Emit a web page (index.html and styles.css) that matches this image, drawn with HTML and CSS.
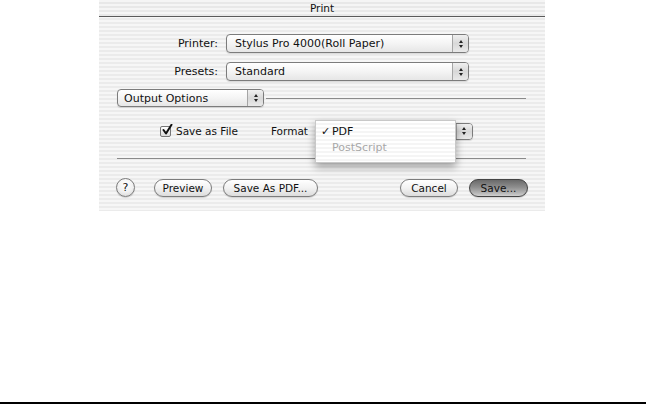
FILE: index.html
```html
<!DOCTYPE html>
<html>
<head>
<meta charset="utf-8">
<title>Print</title>
<link rel="stylesheet" href="styles.css">
</head>
<body>
<div class="page">
  <div class="window">
    <div class="titlebar">Print</div>
    <div class="content">
      <div class="form-grid">
        <div class="label">Printer:</div>
        <div class="popup"><span class="popup-text">Stylus Pro 4000(Roll Paper)</span><span class="stepper"><span class="up"></span><span class="down"></span></span></div>
        <div class="label">Presets:</div>
        <div class="popup"><span class="popup-text">Standard</span><span class="stepper"><span class="up"></span><span class="down"></span></span></div>
      </div>
      <div class="section-row">
        <div class="popup popup-small"><span class="popup-text">Output Options</span><span class="stepper"><span class="up"></span><span class="down"></span></span></div>
        <div class="rule"></div>
      </div>
      <div class="options-row">
        <span class="checkbox"><svg width="12" height="12" viewBox="0 0 12 12"><path d="M2.5 6 L5 9.5 L10.5 0.8" fill="none" stroke="#111" stroke-width="2" stroke-linecap="round" stroke-linejoin="round"/></svg></span>
        <span class="check-label">Save as File</span>
        <span class="format-label">Format</span>
        <div class="popup popup-format"><span class="popup-text"></span><span class="stepper"><span class="up"></span><span class="down"></span></span>
          <div class="menu">
            <div class="menu-item"><span class="mark">✓</span>PDF</div>
            <div class="menu-item disabled"><span class="mark"></span>PostScript</div>
          </div>
        </div>
      </div>
      <div class="separator"></div>
      <div class="buttons">
        <div class="help">?</div>
        <div class="btn btn-preview">Preview</div>
        <div class="btn btn-pdf">Save As PDF...</div>
        <div class="spacer"></div>
        <div class="btn btn-cancel">Cancel</div>
        <div class="btn btn-default">Save...</div>
      </div>
    </div>
  </div>
  <div class="bottom-line"></div>
</div>
</body>
</html>
```

FILE: styles.css
```css
html, body {
  margin: 0;
  padding: 0;
  background: #ffffff;
}
.page {
  height: 404px;
  display: flex;
  flex-direction: column;
  font-family: "DejaVu Sans", "Liberation Sans", sans-serif;
  color: #111;
}
.window {
  width: 446px;
  height: 211px;
  margin-left: 99px;
  background: repeating-linear-gradient(to bottom, #f6f6f6 0px, #f6f6f6 2px, #ebebeb 2px, #ebebeb 4px);
  display: flex;
  flex-direction: column;
}
.titlebar {
  height: 16px;
  line-height: 16px;
  border-bottom: 1px solid #5a5a5a;
  text-align: center;
  font-size: 10.5px;
  background: repeating-linear-gradient(to bottom, #f5f5f5 0px, #f5f5f5 2px, #e8e8e8 2px, #e8e8e8 4px);
}
.content {
  padding: 17px 19px 0 18px;
  display: flex;
  flex-direction: column;
}
.form-grid {
  display: grid;
  grid-template-columns: 101px 243px;
  column-gap: 8px;
  row-gap: 9px;
  align-items: center;
}
.label {
  text-align: right;
  font-size: 11px;
}
.popup {
  position: relative;
  height: 19px;
  box-sizing: border-box;
  border: 1px solid #7c7c7c;
  border-radius: 4px;
  background: linear-gradient(to bottom, #ffffff 0%, #f4f4f4 50%, #e6e6e6 100%);
  display: flex;
  align-items: center;
  box-shadow: 0 1px 1px rgba(0,0,0,0.12);
}
.popup-text {
  flex: 1;
  padding-left: 8px;
  font-size: 11px;
  white-space: nowrap;
}
.stepper {
  width: 15px;
  height: 100%;
  border-left: 1px solid #a5a5a5;
  border-radius: 0 3px 3px 0;
  background: linear-gradient(to bottom, #f0f0f0 0%, #d8d8d8 50%, #e9e9e9 100%);
  display: flex;
  flex-direction: column;
  align-items: center;
  justify-content: center;
  gap: 2px;
}
.up {
  width: 0;
  height: 0;
  border-left: 2.5px solid transparent;
  border-right: 2.5px solid transparent;
  border-bottom: 3px solid #222;
}
.down {
  width: 0;
  height: 0;
  border-left: 2.5px solid transparent;
  border-right: 2.5px solid transparent;
  border-top: 3px solid #222;
}
.section-row {
  margin-top: 8px;
  display: flex;
  align-items: center;
}
.popup-small {
  width: 147px;
  height: 18px;
}
.popup-small .popup-text {
  padding-left: 6px;
}
.rule {
  flex: 1;
  height: 1px;
  background: #8a8a8a;
  margin-left: 2px;
}
.options-row {
  margin-top: 15px;
  height: 18px;
  display: flex;
  align-items: center;
  font-size: 10.5px;
  padding-left: 43px;
}
.checkbox {
  width: 11px;
  height: 11px;
  box-sizing: border-box;
  border: 1px solid #777;
  border-radius: 2px;
  background: linear-gradient(to bottom, #ffffff, #dcdcdc);
  position: relative;
  display: inline-block;
}
.checkbox svg {
  position: absolute;
  left: 0;
  top: -3px;
}
.check-label {
  margin-left: 5px;
}
.format-label {
  margin-left: 33px;
}
.popup-format {
  margin-left: 7px;
  width: 158px;
  height: 17px;
}
.menu {
  position: absolute;
  left: -1px;
  top: -4px;
  width: 141px;
  height: 43px;
  box-sizing: border-box;
  padding-top: 3px;
  background: repeating-linear-gradient(to bottom, #ffffff 0px, #ffffff 2px, #f5f5f5 2px, #f5f5f5 4px);
  border: 1px solid #c8c8c8;
  box-shadow: 0 4px 8px rgba(0,0,0,0.35);
  font-size: 11px;
}
.menu-item {
  height: 16px;
  line-height: 16px;
  display: flex;
}
.mark {
  width: 16px;
  box-sizing: border-box;
  padding-left: 5px;
  font-size: 11px;
}
.menu-item.disabled {
  color: #a8a8a8;
}
.separator {
  margin-top: 18px;
  height: 1px;
  background: #8a8a8a;
}
.buttons {
  margin-top: 19px;
  margin-left: -1px;
  margin-right: -2px;
  display: flex;
  align-items: center;
  font-size: 10.5px;
}
.help {
  width: 19px;
  height: 19px;
  box-sizing: border-box;
  border: 1px solid #7c7c7c;
  border-radius: 50%;
  background: radial-gradient(circle at 50% 30%, #ffffff 0%, #f0f0f0 55%, #d2d2d2 100%);
  text-align: center;
  line-height: 17px;
  font-size: 11px;
  box-shadow: 0 1px 1px rgba(0,0,0,0.15);
}
.btn {
  height: 18px;
  box-sizing: border-box;
  border: 1px solid #7c7c7c;
  border-radius: 9px;
  background: linear-gradient(to bottom, #ffffff 0%, #f2f2f2 50%, #dcdcdc 100%);
  display: flex;
  align-items: center;
  justify-content: center;
  box-shadow: 0 1px 1px rgba(0,0,0,0.15);
}
.btn-preview {
  margin-left: 19px;
  width: 58px;
}
.btn-pdf {
  margin-left: 11px;
  width: 95px;
}
.spacer {
  flex: 1;
}
.btn-cancel {
  width: 58px;
}
.btn-default {
  margin-left: 11px;
  width: 59px;
  border-color: #444;
  background: linear-gradient(to bottom, #6a6a6a 0%, #8e8e8e 45%, #b5b5b5 80%, #d0d0d0 100%);
  color: #111;
}
.bottom-line {
  margin-top: auto;
  margin-bottom: 0;
  height: 2px;
  background: #000;
}
```
